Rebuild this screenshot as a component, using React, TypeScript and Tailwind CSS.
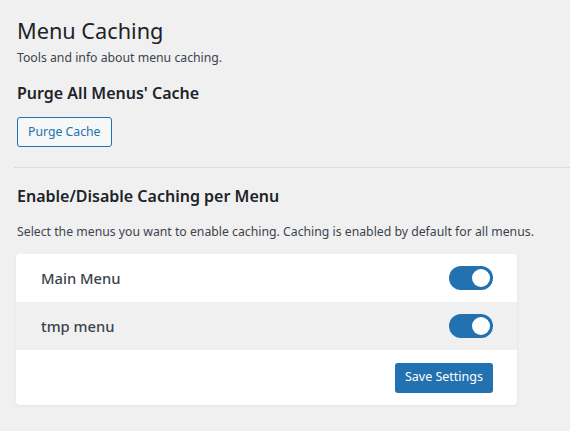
const menus = ['Main Menu', 'tmp menu'];

const Toggle = () => (
  <span className="relative inline-block h-[24px] w-[44px] rounded-full bg-[#2271b1]">
    <span className="absolute right-[3px] top-[3px] h-[18px] w-[18px] rounded-full bg-white" />
  </span>
);

export default function App() {
  return (
    <div
      className="min-h-[431px] bg-[#f0f0f1] text-[#3c434a] pt-[12px]"
      style={{ fontFamily: '"Noto Sans", "Open Sans", sans-serif' }}
    >
      <div className="pl-[17px]">
        <h1 className="text-[21.7px] leading-[30px] font-normal text-[#1d2327] pt-[4px]">Menu Caching</h1>
        <p className="text-[12.25px] leading-[20px] mt-[2px]">Tools and info about menu caching.</p>
        <h2 className="text-[16px] leading-[22px] font-semibold text-[#1d2327] mt-[14px]">Purge All Menus' Cache</h2>
        <button className="mt-[13px] h-[30px] px-[10px] rounded-[3px] border border-[#2271b1] bg-[#f6f7f7] text-[#2271b1] text-[12.25px]">
          Purge Cache
        </button>
      </div>

      <hr className="mt-[20px] ml-[14px] border-0 border-t border-[#dcdcde]" />

      <div className="pl-[17px]">
        <h2 className="text-[16px] leading-[22px] font-semibold text-[#1d2327] mt-[17px]">Enable/Disable Caching per Menu</h2>
        <p className="text-[12.25px] leading-[20px] mt-[15px]">
          Select the menus you want to enable caching. Caching is enabled by default for all menus.
        </p>

        <div className="mt-[12px] w-[501px] -ml-[1px] rounded-[4px] bg-white shadow-[0_1px_3px_rgba(0,0,0,0.06)] overflow-hidden">
          {menus.map((m, i) => (
            <div
              key={m}
              className={`flex h-[48px] items-center justify-between pl-[25px] pr-[24px] ${i % 2 ? 'bg-[#f0f0f1]' : 'bg-white'}`}
            >
              <span className="text-[14.75px] font-medium">{m}</span>
              <Toggle />
            </div>
          ))}
          <div className="flex h-[55px] items-center justify-end pr-[24px]">
            <button className="h-[30px] px-[10px] rounded-[3px] bg-[#2271b1] text-white text-[12.5px]">
              Save Settings
            </button>
          </div>
        </div>
      </div>
    </div>
  );
}
